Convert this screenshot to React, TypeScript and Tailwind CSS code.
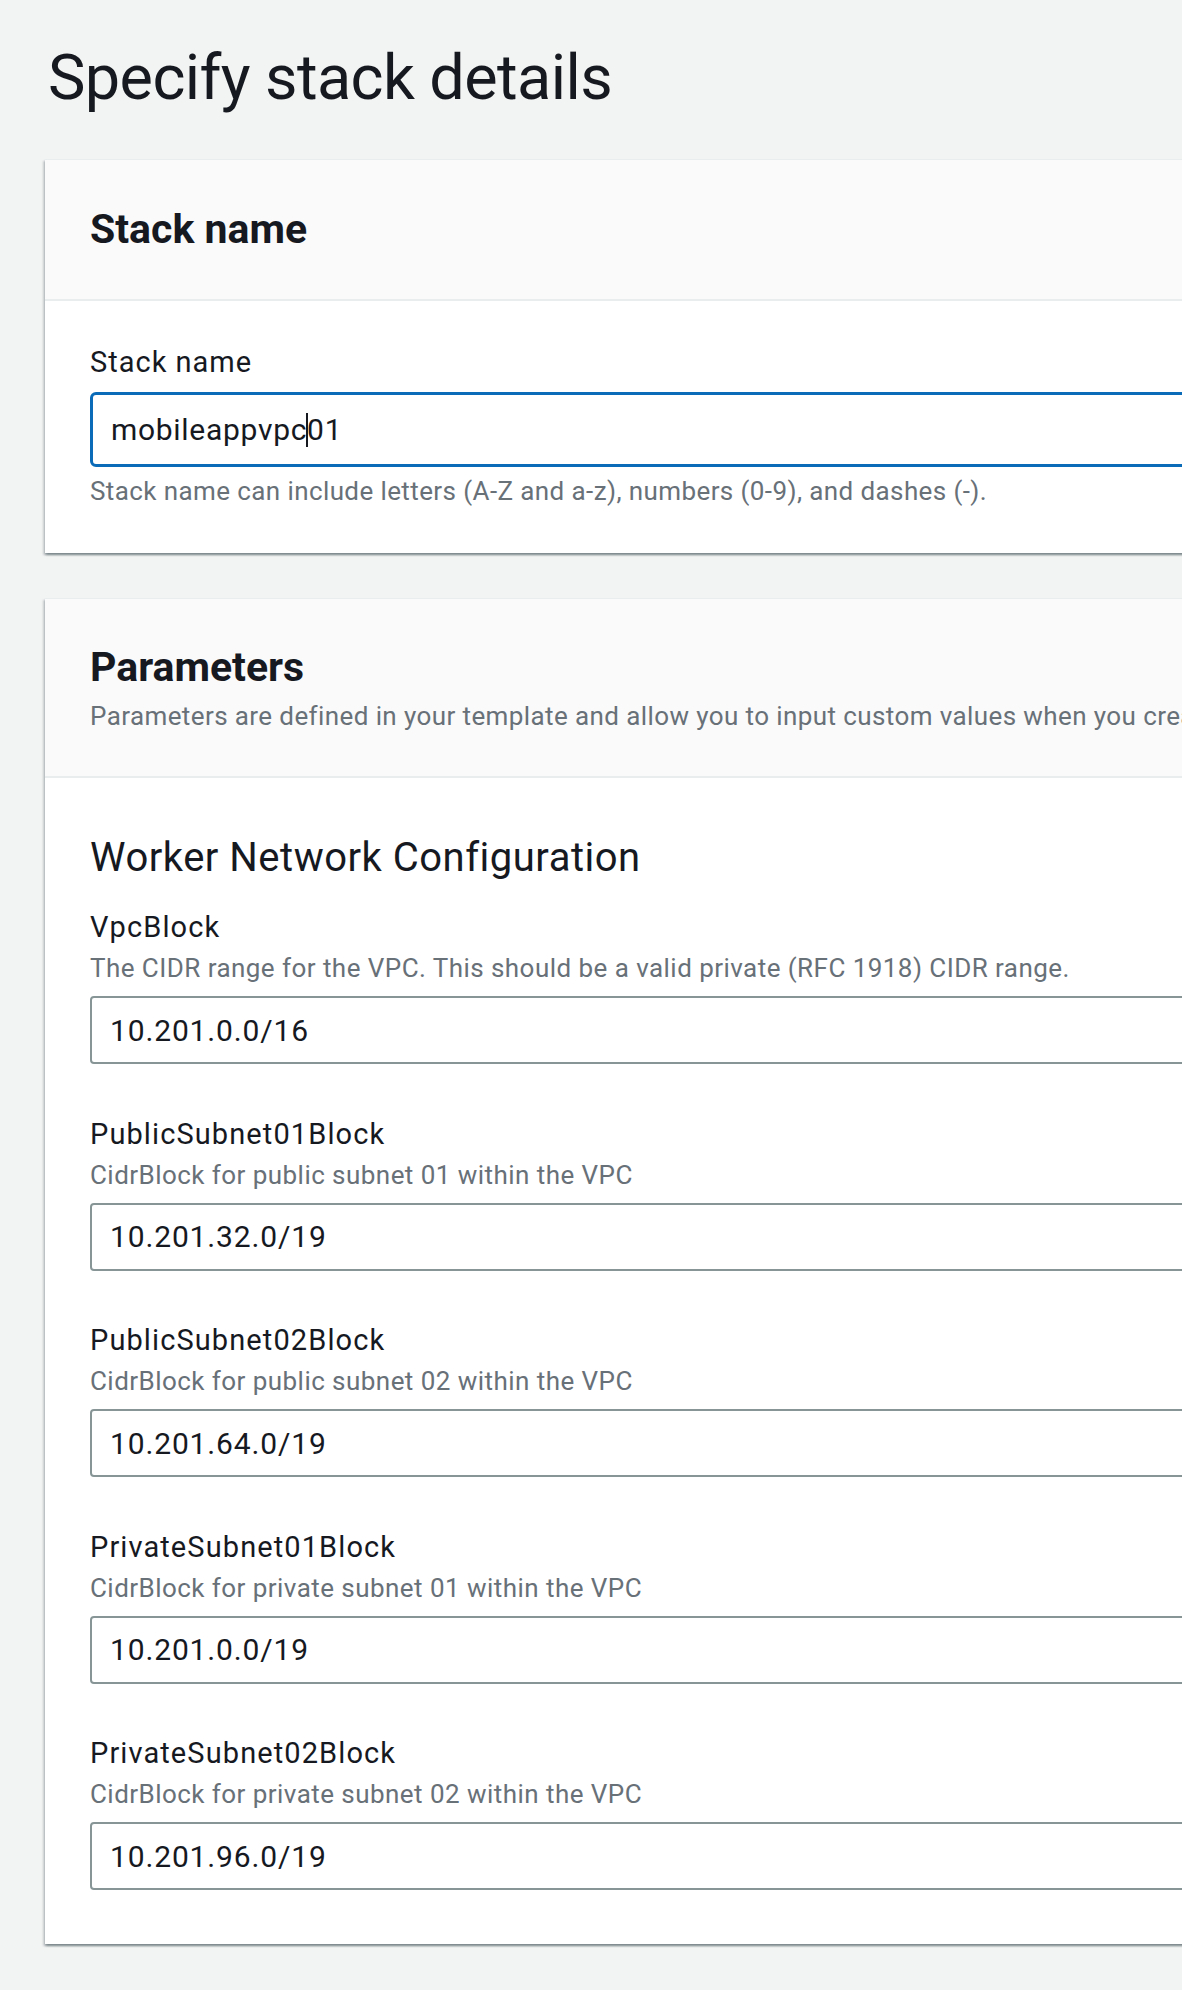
import React from 'react'

interface Field {
  name: string
  description: string
  value: string
}

const fields: Field[] = [
  {
    name: 'VpcBlock',
    description: 'The CIDR range for the VPC. This should be a valid private (RFC 1918) CIDR range.',
    value: '10.201.0.0/16',
  },
  { name: 'PublicSubnet01Block', description: 'CidrBlock for public subnet 01 within the VPC', value: '10.201.32.0/19' },
  { name: 'PublicSubnet02Block', description: 'CidrBlock for public subnet 02 within the VPC', value: '10.201.64.0/19' },
  { name: 'PrivateSubnet01Block', description: 'CidrBlock for private subnet 01 within the VPC', value: '10.201.0.0/19' },
  { name: 'PrivateSubnet02Block', description: 'CidrBlock for private subnet 02 within the VPC', value: '10.201.96.0/19' },
]

const cardClass =
  'w-[1400px] bg-white border-t border-[#eaeded] shadow-[0_2px_2px_0_rgba(0,28,36,0.3),2px_2px_2px_0_rgba(0,28,36,0.15),-2px_2px_2px_0_rgba(0,28,36,0.15)]'

const ParamField = ({ field, first }: { field: Field; first: boolean }) => (
  <div className={first ? 'mt-[31px]' : 'mt-[51.5px]'}>
    <label className="block text-[29px] leading-[36px] tracking-[1.1px] text-[#16191f]">{field.name}</label>
    <p className="mt-[7px] text-[26px] leading-[32px] tracking-[0.45px] text-[#687078]">{field.description}</p>
    <input
      type="text"
      defaultValue={field.value}
      className="mt-[12px] block w-[1300px] h-[68px] px-[18px] text-[30px] tracking-[0.85px] text-[#16191f] bg-white border-2 border-[#879596] rounded-[4px] outline-none"
    />
  </div>
)

export default function App() {
  return (
    <div className="min-h-screen w-full overflow-hidden bg-[#f2f3f3] pl-[45px] pb-[45px] font-['Roboto','Liberation_Sans',sans-serif] text-[#16191f]">
      <h1 className="pt-[46px] pl-[3px] text-[63px] leading-[63px] tracking-[-0.6px] font-normal">Specify stack details</h1>

      {/* Stack name */}
      <section className={`mt-[50px] ${cardClass}`}>
        <div className="bg-[#fafafa] px-[45px] py-[49px] border-b-2 border-[#eaeded]">
          <h2 className="text-[41px] leading-[41px] font-bold">Stack name</h2>
        </div>
        <div className="px-[45px] pt-[43px] pb-[46px]">
          <label className="block text-[29px] leading-[36px] tracking-[1px]">Stack name</label>
          <div className="mt-[12px] w-[1300px] h-[75px] flex items-center px-[18px] border-[3px] border-[#0a6bb8] rounded-[6px] text-[30px] tracking-[0.7px] bg-white">
            <span>mobileappvpc</span>
            <span className="inline-block w-[2px] h-[34px] -mx-px bg-[#16191f]" />
            <span>01</span>
          </div>
          <p className="mt-[8px] text-[26px] leading-[32px] tracking-[0.4px] text-[#687078]">
            Stack name can include letters (A-Z and a-z), numbers (0-9), and dashes (-).
          </p>
        </div>
      </section>

      {/* Parameters */}
      <section className={`mt-[45px] ${cardClass}`}>
        <div className="bg-[#fafafa] px-[45px] pt-[48px] pb-[44px] border-b-2 border-[#eaeded]">
          <h2 className="text-[41px] leading-[41px] font-bold">Parameters</h2>
          <p className="mt-[12px] text-[26px] leading-[32px] tracking-[0.4px] text-[#687078] whitespace-nowrap">
            Parameters are defined in your template and allow you to input custom values when you create or update a stack.
          </p>
        </div>
        <div className="px-[45px] pt-[60px] pb-[54px]">
          <h3 className="text-[40px] leading-[40px] tracking-[0.5px] font-normal">Worker Network Configuration</h3>
          {fields.map((f, i) => (
            <ParamField key={f.name} field={f} first={i === 0} />
          ))}
        </div>
      </section>
    </div>
  )
}
